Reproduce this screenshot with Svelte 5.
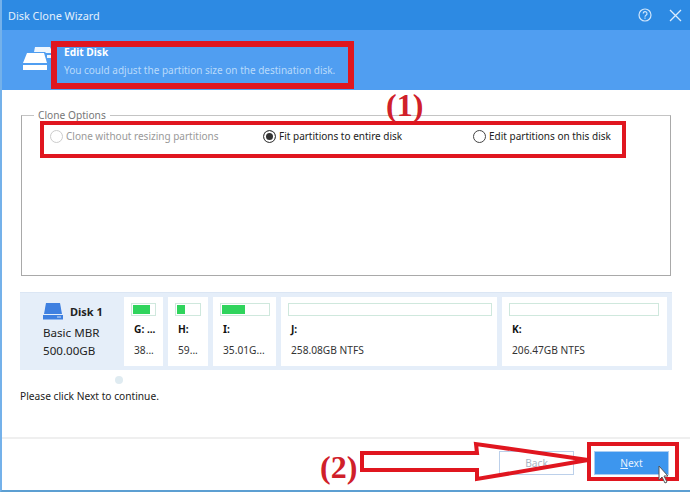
<script>
	const parts = [
		{ letter: 'G: ...', size: '38...', width: 39, used: 17, bar: 25 },
		{ letter: 'H:', size: '59...', width: 40, used: 8, bar: 26 },
		{ letter: 'I:', size: '35.01G...', width: 63, used: 23, bar: 50 },
		{ letter: 'J:', size: '258.08GB NTFS', width: 216, used: 0, bar: 204 },
		{ letter: 'K:', size: '206.47GB NTFS', width: 165, used: 0, bar: 150 }
	];
</script>

<div class="window">
	<div class="titlebar">
		<span class="title">Disk Clone Wizard</span>
		<div class="win-icons">
			<svg width="14" height="14" viewBox="0 0 14 14" fill="none" stroke="#cfe5fb" stroke-width="1.2">
				<circle cx="7" cy="7" r="6" />
				<path d="M5.2 5.6a1.9 1.9 0 1 1 2.8 1.6c-.7.4-1 .8-1 1.5" />
				<path d="M7 9.6v1.2" />
			</svg>
			<svg width="13" height="13" viewBox="0 0 13 13" fill="none" stroke="#dcecfc" stroke-width="1.3">
				<path d="M1 1l11 11M12 1L1 12" />
			</svg>
		</div>
	</div>

	<div class="header">
		<svg class="drives" width="32" height="26" viewBox="0 0 32 26" fill="#fff">
			<path d="M13 2h15l3 6h-7l-1-1H12z" opacity="0.9" />
			<path d="M25 10h6v3h-6z" opacity="0.9" />
			<path d="M5 8h17l3 10H1z" />
			<path d="M1 20h24v5H1z" />
		</svg>
		<div class="header-text">
			<div class="step">Edit Disk</div>
			<div class="hint">You could adjust the partition size on the destination disk.</div>
		</div>
	</div>

	<div class="content">
		<fieldset class="options">
			<legend>Clone Options</legend>
			<div class="radios">
				<label class="radio disabled"><span class="dot"></span>Clone without resizing partitions</label>
				<label class="radio fit"><span class="dot on"></span>Fit partitions to entire disk</label>
				<label class="radio edit"><span class="dot"></span>Edit partitions on this disk</label>
			</div>
		</fieldset>

		<div class="diskmap">
			<div class="diskinfo">
				<div class="diskname">
					<svg width="20" height="17" viewBox="0 0 20 17">
						<path d="M3 0h14l2 11H1z" fill="#3f80e0" />
						<path d="M0 12h20v4.5H0z" fill="#3f80e0" />
						<path d="M14 14h4" stroke="#cfe0f8" stroke-width="1" />
					</svg>
					<b>Disk 1</b>
				</div>
				<div>Basic MBR</div>
				<div>500.00GB</div>
			</div>
			{#each parts as p}
				<div class="part" style="width: {p.width}px">
					<div class="bar" style="width: {p.bar}px">
						<div class="used" style="width: {p.used}px"></div>
					</div>
					<div class="letter">{p.letter}</div>
					<div class="size">{p.size}</div>
				</div>
			{/each}
		</div>

		<div class="spinner"></div>
		<p class="note">Please click Next to continue.</p>
	</div>

	<div class="footer">
		<button class="back">Back</button>
		<button class="next"><u>N</u>ext</button>
	</div>

	<!-- red annotations on top of the dialog -->
	<div class="mark mark-head"></div>
	<div class="mark mark-radios"></div>
	<div class="mark mark-next"></div>
	<span class="num num1">(1)</span>
	<span class="num num2">(2)</span>
	<svg class="arrow" width="240" height="46" viewBox="0 0 240 46" fill="none" stroke="#e0161f" stroke-width="4">
		<path d="M3 12H118L117 3 229 19 118 38 118 29H3Z" />
	</svg>
	<svg class="cursor" width="12" height="19" viewBox="0 0 12 19">
		<path d="M1 1v14l3-3 3 6 2-1-3-6h4z" fill="#fff" stroke="#555" stroke-width="1" />
	</svg>
</div>

<style>
	:global(body) {
		margin: 0;
	}

	.window {
		position: relative;
		width: 690px;
		height: 492px;
		box-sizing: border-box;
		display: flex;
		flex-direction: column;
		background: #fff;
		border-left: 2px solid #74b1ea;
		border-bottom: 2px solid #5c9fd2;
		font-family: 'Noto Sans', sans-serif;
		font-size: 10.2px;
		color: #222;
		overflow: hidden;
	}

	.titlebar {
		height: 30px;
		flex: none;
		display: flex;
		align-items: center;
		justify-content: space-between;
		padding: 0 8px 0 6px;
		background: #2d8ae3;
		color: #e4f0fc;
		font-size: 10.9px;
	}

	.win-icons {
		display: flex;
		align-items: center;
		gap: 17px;
	}

	.header {
		height: 60px;
		flex: none;
		display: flex;
		align-items: center;
		background: #509ef1;
		color: #fff;
	}

	.drives {
		margin: 0 10px 4px 20px;
	}

	.header-text {
		display: flex;
		flex-direction: column;
		gap: 4px;
		margin-top: 1px;
	}

	.step {
		font-weight: 700;
	}

	.hint {
		color: #b9dafa;
		font-size: 10px;
	}

	.content {
		flex: 1;
		display: flex;
		flex-direction: column;
		padding: 18px 18px 0 18px;
	}

	.options {
		margin: 0 1px;
		height: 168px;
		box-sizing: border-box;
		padding: 0;
		border: 1px solid #a9a9a9;
		border-top-color: #c4c4c4;
	}

	legend {
		margin-left: 12px;
		padding: 0 4px;
		color: #777;
	}

	.radios {
		display: flex;
		padding: 7px 0 0 28px;
		font-size: 10px;
	}

	.radio {
		display: flex;
		align-items: center;
		gap: 3px;
	}

	.disabled {
		color: #999;
		width: 213px;
	}

	.fit {
		width: 210px;
	}

	.dot {
		width: 13px;
		height: 13px;
		box-sizing: border-box;
		border: 1px solid #444;
		border-radius: 50%;
		background: #fff;
	}

	.disabled .dot {
		border-color: #ccc;
	}

	.dot.on {
		background: #333;
		box-shadow: inset 0 0 0 2px #fff;
	}

	.diskmap {
		margin-top: 16px;
		height: 78px;
		box-sizing: border-box;
		display: flex;
		gap: 5px;
		padding: 4px 5px 4px;
		background: #e5eef9;
		border-top: 1px solid #dbe6f4;
	}

	.diskinfo {
		width: 94px;
		box-sizing: border-box;
		padding: 6px 0 0 18px;
		display: flex;
		flex-direction: column;
		gap: 3px;
		font-size: 11.6px;
	}

	.diskname {
		display: flex;
		align-items: center;
		gap: 7px;
		height: 17px;
		margin-bottom: 2px;
		font-size: 11px;
	}

	.part {
		box-sizing: border-box;
		padding: 6px 0 0 7px;
		background: #fff;
		white-space: nowrap;
		overflow: hidden;
	}

	.bar {
		height: 13px;
		box-sizing: border-box;
		padding: 1px;
		border: 1px solid #cfe8dd;
	}

	.used {
		height: 100%;
		background: #2fd45c;
	}

	.letter {
		margin: 6px 0 0 3px;
		font-weight: 700;
		color: #111;
	}

	.size {
		margin: 7px 0 0 3px;
		color: #333;
	}

	.spinner {
		width: 8px;
		height: 8px;
		margin: 6px 0 0 95px;
		border-radius: 50%;
		background: #dfebf1;
	}

	.note {
		margin: 5px 0 0;
	}

	.footer {
		height: 53px;
		flex: none;
		box-sizing: border-box;
		display: flex;
		align-items: flex-start;
		justify-content: flex-end;
		gap: 20px;
		padding: 12px 21px 0 0;
		border-top: 2px solid #efefef;
	}

	button {
		font: inherit;
		height: 24px;
		box-sizing: border-box;
		width: 75px;
		padding: 0;
		border-radius: 0;
	}

	.back {
		background: #fff;
		border: 1px solid #bcd0ea;
		color: #a9b4c2;
	}

	.next {
		background: #3d96ee;
		border: 1px solid #a9cdf3;
		color: #e8f3fe;
	}

	.mark {
		position: absolute;
		box-sizing: border-box;
		border: 5px solid #e0161f;
	}

	.mark-head {
		left: 49px;
		top: 41px;
		width: 303px;
		height: 48px;
		border-width: 6px;
	}

	.mark-radios {
		left: 38px;
		top: 121px;
		width: 586px;
		height: 37px;
		border-width: 4px;
	}

	.mark-next {
		left: 585px;
		top: 442px;
		width: 92px;
		height: 39px;
		border-width: 4px;
	}

	.num {
		position: absolute;
		font-family: 'Liberation Serif', serif;
		font-weight: 700;
		font-size: 32px;
		color: #d0202a;
		line-height: 30px;
	}

	.num1 {
		left: 384px;
		top: 90px;
	}

	.num2 {
		left: 318px;
		top: 452px;
	}

	.arrow {
		position: absolute;
		left: 357px;
		top: 441px;
	}

	.cursor {
		position: absolute;
		left: 656px;
		top: 465px;
	}
</style>
